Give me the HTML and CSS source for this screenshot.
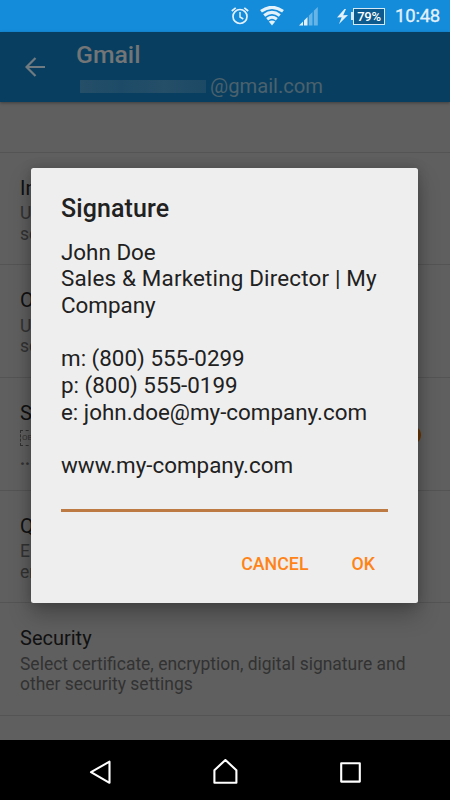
FILE: index.html
```html
<!DOCTYPE html>
<html lang="en">
<head>
<meta charset="utf-8">
<title>Gmail settings</title>
<link rel="stylesheet" href="styles.css">
</head>
<body>
<div class="phone">
  <header class="status">
    <svg class="alarm" width="18" height="20" viewBox="0 0 18 20" fill="none" stroke="currentColor"><circle cx="9" cy="10.5" r="7" stroke-width="1.7"/><path d="M9 6v5l3.3 2" stroke-width="1.5"/><path d="M.8 5 4.7 1.8M17.2 5l-3.9-3.2" stroke-width="1.7"/></svg>
    <svg class="wifi" width="24" height="20" viewBox="0 0 24 20" fill="none" stroke="currentColor" stroke-width="3.1"><path d="M1 5.3Q12-2.6 23 5.3M4.2 9.4Q12 3.4 19.8 9.4M7.2 13.2Q12 9.3 16.8 13.2"/><path d="M8.8 15.5Q12 13.3 15.2 15.5L12 19.5z" fill="currentColor" stroke="none"/></svg>
    <svg class="signal" width="19" height="19" viewBox="0 0 19 19" fill="currentColor"><path d="M0 18.5 4 14.5v4zM5 18.5v-5L8.5 10v8.5z"/><path opacity=".4" d="M9.8 18.5V8.8L13.5 5v13.5zM14.8 18.5V3.7L18.8 0v18.5z"/></svg>
    <svg class="bolt" width="11" height="15" viewBox="0 0 11 15" fill="currentColor"><path d="M7.5 0 0 8.5l4.7-.3L2 15l9-9-4.8.3L9 0z"/></svg>
    <span class="battery">79%</span>
    <time class="clock">10:48</time>
  </header>
  <div class="appbar">
    <svg class="back" width="20" height="20" viewBox="0 0 20 20" fill="none" stroke="currentColor" stroke-width="2.2"><path d="M20 10H1.8M10.5 1 1.5 10l9 9"/></svg>
    <div class="heading">
      <h1>Gmail</h1>
      <div class="account"><span class="redacted"></span>@gmail.com</div>
    </div>
  </div>
  <main class="list">
    <div class="gap"></div>
    <section class="row"><h2>In</h2><p>U<br>se</p></section>
    <section class="row"><h2>O</h2><p>U<br>se</p></section>
    <section class="row"><h2>S</h2><p class="preview"><span class="obj">OBJ</span><br><span class="dots">...</span></p><i class="toggle"></i></section>
    <section class="row"><h2>Q</h2><p>E<br>en</p></section>
    <section class="row"><h2>Security</h2><p>Select certificate, encryption, digital signature and other security settings</p></section>
    <div class="rest"></div>
  </main>
  <nav class="nav">
    <svg width="26" height="26" viewBox="0 0 26 26"><path d="M21.5 2.7v21.1L3 13.2z"/></svg>
    <svg width="26" height="26" viewBox="0 0 26 26"><path d="M1.4 11.2 12.4 1 23.4 11.2v12.6h-22z"/></svg>
    <svg width="26" height="26" viewBox="0 0 26 26"><path d="M3.2 4.2h18.6v18.4H3.2z"/></svg>
  </nav>
  <div class="dialog" role="dialog">
    <h3>Signature</h3>
    <div class="field">John Doe<br><span class="role">Sales &amp; Marketing Director | My</span> Company<br><br>m: (800) 555-0299<br>p: (800) 555-0199<br>e: john.doe@my-company.com<br><br>www.my-company.com</div>
    <div class="actions"><button>CANCEL</button><button>OK</button></div>
  </div>
</div>
</body>
</html>
```
FILE: styles.css
```css
* { box-sizing: border-box; }
body { margin: 0; font-family: Roboto, sans-serif; }
h1, h2, h3, p { margin: 0; font-weight: 400; }
svg { display: block; flex: none; }
.phone { position: relative; width: 450px; height: 800px; overflow: hidden; display: flex; flex-direction: column; background: #5f5f5f; }
.status { height: 32px; flex: none; display: flex; align-items: center; background: #158cda; color: #e3f1fb; padding-left: 231px; }
.wifi { margin-left: 11px; }
.signal { margin-left: 15px; }
.bolt { margin-left: 19px; }
.battery { position: relative; width: 32px; height: 17px; margin-left: 5px; border: 1.5px solid #d5e9f7; background: #0d5a8e; font-size: 13px; letter-spacing: -.3px; font-weight: 500; line-height: 15px; text-align: center; color: #fff; }
.battery::before { content: ""; position: absolute; left: -3px; top: 3px; width: 2px; height: 8px; background: #d5e9f7; }
.clock { margin-left: 10px; font-size: 18.5px; line-height: 32px; letter-spacing: -.2px; white-space: nowrap; -webkit-text-stroke: .3px currentColor; }
.appbar { position: relative; height: 70px; flex: none; display: flex; background: #083f60; box-shadow: 0 1px 3px rgba(0,0,0,.35); padding: 8px 0 0 25px; }
.back { margin-top: 17px; color: #707b81; }
.heading { margin-left: 31px; }
h1 { font-size: 24.8px; font-weight: 500; line-height: 29px; color: #737576; }
.account { display: flex; align-items: center; margin: 5px 0 0 4px; font-size: 20.2px; line-height: 24px; color: #4b616d; }
.redacted { width: 126px; height: 13px; margin-right: 4px; background: linear-gradient(90deg, #254e68, #1d4b67, #254e68, #1c4965); }
.list { flex: 1; min-height: 0; }
.gap { height: 49.5px; }
.row { position: relative; height: 112.7px; border-top: 1px solid #545454; padding: 23px 20px 0; }
.row h2 { font-size: 20px; line-height: 24px; color: #111; }
.row p { margin-top: 3.5px; font-size: 17.48px; line-height: 20.5px; color: #323232; }
.obj { display: inline-block; width: 20px; height: 16px; border: 1px dashed #323232; font-size: 8px; line-height: 14px; padding-left: 1px; vertical-align: top; margin-top: 2px; }
.dots { font-weight: 700; }
.toggle { position: absolute; right: 29px; top: 46px; width: 26px; height: 22px; border-radius: 50%; background: #6b3604; }
.rest { border-top: 1px solid #545454; }
.nav { position: relative; height: 60px; flex: none; display: flex; gap: 99px; padding: 19px 0 0 88px; background: #000; }
.nav path { fill: none; stroke: #fff; stroke-width: 2.1; stroke-linejoin: round; }
.dialog { position: absolute; left: 31px; top: 167.5px; width: 387px; height: 435.5px; padding: 25.5px 30px 0; border-radius: 2.5px; background: #eee; color: #212121; box-shadow: 0 12px 22px rgba(0,0,0,.25), 0 0 12px rgba(0,0,0,.18); }
.dialog h3 { font-size: 25px; font-weight: 500; line-height: 32px; letter-spacing: .1px; }
.field { margin-top: 13.5px; height: 273.5px; border-bottom: 3px solid #bd7a42; font-size: 22.4px; line-height: 26.7px; }
.role { letter-spacing: .18px; }
.actions { display: flex; justify-content: flex-end; gap: 43px; margin: 40px 13px 0 0; }
button { border: 0; padding: 0; background: none; font: 500 17.8px/24px Roboto, sans-serif; color: #ff8316; }
```
